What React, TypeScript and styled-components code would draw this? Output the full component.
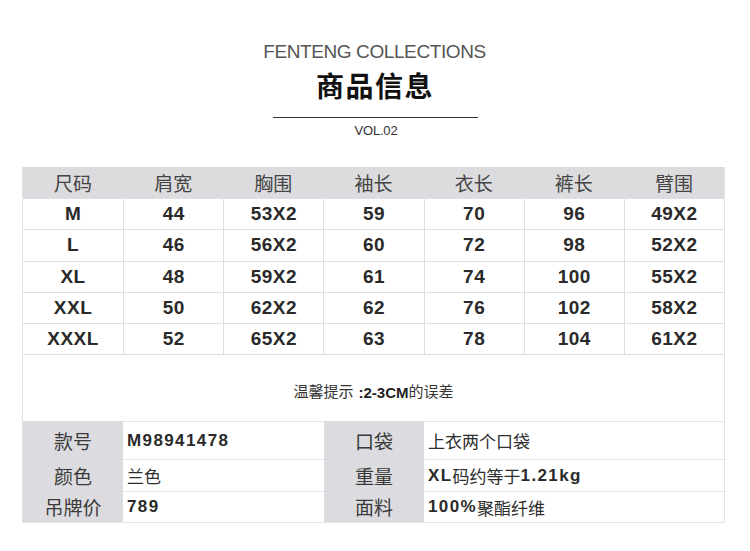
import styled, { createGlobalStyle } from 'styled-components'

const GlobalStyle = createGlobalStyle`
  body {
    margin: 0;
    background: #ffffff;
    font-family: "Liberation Sans", "Noto Sans CJK SC", sans-serif;
  }
  * {
    box-sizing: border-box;
  }
`

const Page = styled.div`
  width: 750px;
  height: 551px;
  padding-top: 42px;
  background: #ffffff;
`

const Heading = styled.div`
  display: flex;
  flex-direction: column;
  align-items: center;
`

const Brand = styled.div`
  height: 20px;
  line-height: 20px;
  font-size: 19px;
  letter-spacing: -0.4px;
  color: #555555;
  margin-left: -1px;
`

const Name = styled.div`
  margin-top: 6px;
  height: 34px;
  line-height: 34px;
  font-family: "Noto Sans CJK SC", sans-serif;
  font-size: 28px;
  font-weight: 700;
  letter-spacing: 1.5px;
  color: #111111;
`

const Rule = styled.div`
  margin-top: 15px;
  width: 205px;
  height: 1px;
  background: #333333;
  margin-left: 1px;
`

const Vol = styled.div`
  margin-top: 5px;
  height: 16px;
  line-height: 16px;
  font-size: 13px;
  letter-spacing: -0.2px;
  color: #333333;
  margin-left: 2px;
`

const Sheet = styled.div`
  margin: 28px 0 0 22px;
  width: 703px;
  border-left: 1px solid #e4e4e4;
  border-right: 1px solid #e4e4e4;
  border-bottom: 1px solid #e4e4e4;
`

const SizeGrid = styled.div`
  display: grid;
  grid-template-columns: repeat(7, 1fr);
`

const HeadCell = styled.div`
  height: 31px;
  display: flex;
  align-items: center;
  justify-content: center;
  background: #dcdcde;
  font-family: "Noto Sans CJK SC", sans-serif;
  font-size: 19px;
  color: #444444;
`

const DataCell = styled.div<{ $first?: boolean }>`
  height: 31.3px;
  display: flex;
  align-items: center;
  justify-content: center;
  border-top: 1.5px solid #dedee6;
  border-left: ${({ $first }) => ($first ? 'none' : '1.5px solid #dedee6')};
  font-size: 19px;
  font-weight: 700;
  letter-spacing: 0.5px;
  color: #2a2a2a;
`

const Note = styled.div`
  height: 67px;
  display: flex;
  align-items: flex-end;
  justify-content: center;
  padding-bottom: 20px;
  border-top: 1.5px solid #dedee6;
  font-family: "Noto Sans CJK SC", sans-serif;
  font-size: 15px;
  color: #333333;
`

const Strong = styled.b`
  margin-left: 5px;
  font-family: "Liberation Sans", sans-serif;
  font-weight: 700;
  color: #222222;
`

const InfoGrid = styled.div`
  display: grid;
  grid-template-columns: 100px 201px 100px 1fr;
  grid-template-rows: 38px 32px 31px;
`

const Label = styled.div`
  display: flex;
  align-items: center;
  justify-content: center;
  background: #dcdce0;
  font-family: "Noto Sans CJK SC", sans-serif;
  font-size: 19px;
  color: #3a3a3a;
`

const Value = styled.div`
  display: flex;
  align-items: center;
  padding-left: 4px;
  border-top: 1.5px solid #e4e4ea;
  font-family: "Noto Sans CJK SC", sans-serif;
  font-size: 17px;
  color: #2e2e2e;
  white-space: nowrap;
`

const Num = styled.span`
  font-family: "Liberation Sans", sans-serif;
  font-weight: 700;
  font-size: 17px;
  letter-spacing: 1.4px;
  color: #2a2a2a;
`

const heads = ['尺码', '肩宽', '胸围', '袖长', '衣长', '裤长', '臂围']

const sizes = [
  ['M', '44', '53X2', '59', '70', '96', '49X2'],
  ['L', '46', '56X2', '60', '72', '98', '52X2'],
  ['XL', '48', '59X2', '61', '74', '100', '55X2'],
  ['XXL', '50', '62X2', '62', '76', '102', '58X2'],
  ['XXXL', '52', '65X2', '63', '78', '104', '61X2'],
]

const App = (): JSX.Element => {
  return (
    <Page>
      <GlobalStyle />
      <Heading>
        <Brand>FENTENG COLLECTIONS</Brand>
        <Name>商品信息</Name>
        <Rule />
        <Vol>VOL.02</Vol>
      </Heading>
      <Sheet>
        <SizeGrid>
          {heads.map(h => (<HeadCell key={h}>{h}</HeadCell>))}
          {sizes.map(row => row.map((v, i) => (
            <DataCell key={row[0] + i} $first={i === 0}>{v}</DataCell>
          )))}
        </SizeGrid>
        <Note>温馨提示<Strong>:2-3CM</Strong>的误差</Note>
        <InfoGrid>
          <Label>款号</Label>
          <Value><Num>M98941478</Num></Value>
          <Label>口袋</Label>
          <Value>上衣两个口袋</Value>
          <Label>颜色</Label>
          <Value>兰色</Value>
          <Label>重量</Label>
          <Value><Num>XL</Num>码约等于<Num>1.21kg</Num></Value>
          <Label>吊牌价</Label>
          <Value><Num>789</Num></Value>
          <Label>面料</Label>
          <Value><Num>100%</Num>聚酯纤维</Value>
        </InfoGrid>
      </Sheet>
    </Page>
  )
}

export default App
